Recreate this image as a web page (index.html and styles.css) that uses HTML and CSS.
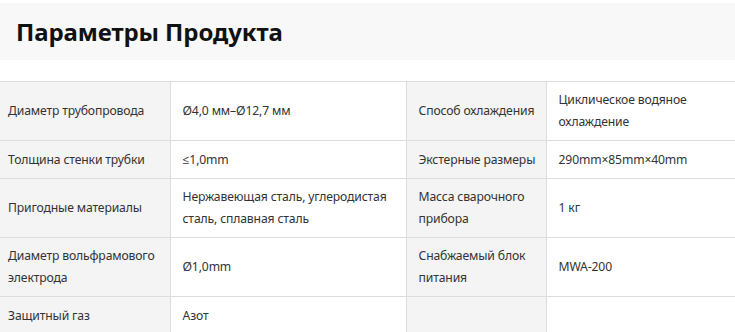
FILE: index.html
```html
<!DOCTYPE html>
<html lang="ru">
<head>
<meta charset="utf-8">
<link rel="stylesheet" href="styles.css">
</head>
<body>
<div class="head"><h2 class="title">Параметры Продукта</h2></div>
<table class="spec">
<colgroup><col class="c1"><col class="c2"><col class="c3"><col class="c4"></colgroup>
<tr class="r2"><th>Диаметр трубопровода</th><td>Ø4,0 мм–Ø12,7 мм</td><th>Способ охлаждения</th><td>Циклическое водяное охлаждение</td></tr>
<tr class="r1"><th>Толщина стенки трубки</th><td>≤1,0mm</td><th>Экстерные размеры</th><td>290mm×85mm×40mm</td></tr>
<tr class="r2"><th>Пригодные материалы</th><td>Нержавеющая сталь, углеродистая сталь, сплавная сталь</td><th>Масса сварочного прибора</th><td>1 кг</td></tr>
<tr class="r2"><th>Диаметр вольфрамового электрода</th><td>Ø1,0mm</td><th>Снабжаемый блок питания</th><td>MWA-200</td></tr>
<tr class="r1"><th>Защитный газ</th><td>Азот</td><th></th><td></td></tr>
</table>
</body>
</html>
```
FILE: styles.css
```css
html, body { margin: 0; padding: 0; background: #fff; }
body { font-family: "Noto Sans", "Open Sans", sans-serif; color: #333; }
.head { margin-top: 3px; height: 57px; background: #f8f8f8; display: flex; align-items: center; padding-left: 16px; }
.title { margin: 0; font-size: 24px; font-weight: 700; color: #111; letter-spacing: -0.1px; }
.spec { margin-top: 21px; width: 100%; border-collapse: collapse; table-layout: fixed; font-size: 12.2px; line-height: 22px; letter-spacing: -0.15px; }
.c1 { width: 170px; } .c2 { width: 236px; } .c3 { width: 140px; } .c4 { width: auto; }
.spec th, .spec td { text-align: left; font-weight: 400; vertical-align: middle; padding: 7px 8px 7px 12px; border: 1px solid #dddddd; color: #333; }
.spec th { background: #f4f4f4; }
.spec tr > :first-child { border-left: none; padding-left: 8px; }
.spec tr > :last-child { border-right: none; }
.r1 th, .r1 td { padding-top: 8px; padding-bottom: 7px; }
```
